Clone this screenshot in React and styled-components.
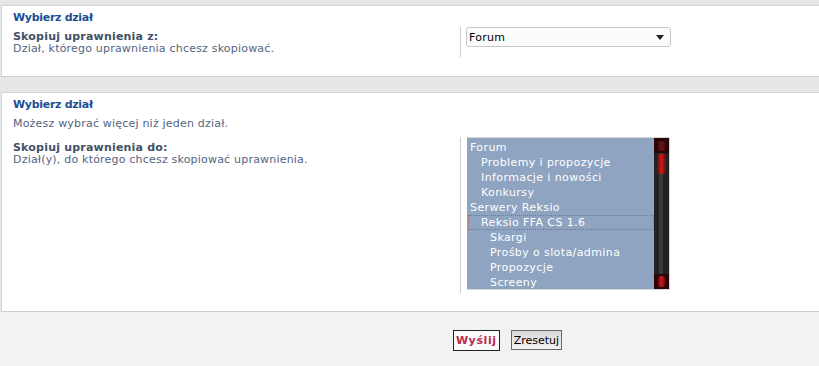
import React from "react";
import styled, { createGlobalStyle } from "styled-components";

const GlobalStyle = createGlobalStyle`
  html, body {
    margin: 0;
    padding: 0;
    background: #e6e7e9;
    font-family: "DejaVu Sans", Verdana, sans-serif;
    font-size: 11px;
  }
`;

const Page = styled.div`
  padding-top: 5px;
  width: 819px;
  height: 366px;
  overflow: hidden;
  box-sizing: border-box;
`;

const Panel = styled.section`
  margin: 0 0 ${({ gap }) => gap || 0}px 1px;
  padding: 5px 0 0 11px;
  background: #fff;
  border-top: 1px solid #d4d4d4;
  border-left: 1px solid #d4d4d4;
  border-bottom: 1px solid #cccccc;
  height: ${({ h }) => h}px;
  box-sizing: border-box;
`;

const Title = styled.h3`
  margin: 0;
  font-size: 11px;
  line-height: 13px;
  font-weight: bold;
  letter-spacing: -0.3px;
  color: #1a4f96;
`;

const Note = styled.p`
  margin: 6px 0 0;
  line-height: 13px;
  letter-spacing: 0.2px;
  color: #536482;
`;

const Row = styled.dl`
  display: flex;
  margin: ${({ top }) => top}px 0 0;
`;

const Term = styled.dt`
  width: 447px;
  padding-top: ${({ pad }) => pad}px;
  color: #536482;
  line-height: 12px;
  letter-spacing: 0.2px;
`;

const Label = styled.label`
  display: block;
  font-weight: bold;
  color: #425067;
`;

const Field = styled.dd`
  margin: 0;
  padding: 0 0 ${({ pb }) => pb}px 5px;
  border-left: 1px solid #cfcfcf;
`;

const Select = styled.div`
  display: flex;
  align-items: center;
  justify-content: space-between;
  width: 205px;
  height: 20px;
  box-sizing: border-box;
  border: 1px solid #c8c8c8;
  border-radius: 3px;
  background: #fbfbfb;
  padding: 0 6px 0 2px;
  color: #000;
  font-size: 11px;
  letter-spacing: 0.3px;
`;

const ListBox = styled.div`
  display: flex;
  width: 203px;
  height: 153px;
  margin-left: 1px;
  border: 1px solid #d8d8d8;
  border-left: 0;
  box-sizing: border-box;
  background: #8ea4c1;
  overflow: hidden;
`;

const Options = styled.ul`
  flex: 1;
  list-style: none;
  margin: 0;
  padding: 2px 0 0 1px;
`;

const Option = styled.li`
  height: 15px;
  line-height: 15px;
  padding-left: ${({ level }) => 2 + level * 11 - (level === 2 ? 2 : 0)}px;
  color: #fff;
  letter-spacing: 0.4px;
  white-space: nowrap;
  box-sizing: border-box;
  outline: ${({ focus }) => (focus ? "1px dotted #b7653a" : "none")};
  outline-offset: -1px;
`;

const Scrollbar = styled.div`
  width: 15px;
  display: flex;
  flex-direction: column;
  background: #262626;
`;

const ScrollButton = styled.div`
  height: 15px;
  background: #2a0707;
  display: flex;
  justify-content: center;
  align-items: center;
`;

const Pill = styled.div`
  width: 7px;
  height: ${({ h }) => h}px;
  border-radius: 3px;
  background: ${({ dim }) =>
    dim
      ? "linear-gradient(90deg, #4a0d0d, #6a1414, #4a0d0d)"
      : "linear-gradient(90deg, #7a0a0a, #c41a1a, #7a0a0a)"};
`;

const Track = styled.div`
  flex: 1;
  display: flex;
  flex-direction: column;
  align-items: center;
  padding-top: 1px;
  background: linear-gradient(90deg, #222 0, #222 5px, #3a3a3a 5px, #3a3a3a 9px, #222 9px);
`;

const Thumb = styled.div`
  width: 9px;
  height: 20px;
  border-radius: 3px;
  background: linear-gradient(90deg, #6a0808, #c81c1c, #6a0808);
`;

const Footer = styled.div`
  display: flex;
  align-items: flex-start;
  justify-content: center;
  gap: 11px;
  padding: 18px 0 0 196px;
  background: #f2f2f2;
  height: 60px;
  box-sizing: border-box;
`;

const Button = styled.button`
  font-family: "DejaVu Sans", Verdana, sans-serif;
  font-size: 11px;
  height: ${({ primary }) => (primary ? 21 : 20)}px;
  padding: 0 2px;
  margin: 0;
  border: 1px solid ${({ primary }) => (primary ? "#222" : "#666")};
  background: ${({ primary }) =>
    primary ? "#fafafa" : "linear-gradient(#d8d8d8, #f4f4f4)"};
  color: ${({ primary }) => (primary ? "#bc2a4d" : "#000")};
  font-weight: ${({ primary }) => (primary ? "bold" : "normal")};
  letter-spacing: ${({ primary }) => (primary ? "0.6px" : "0")};
  cursor: pointer;
`;

const forums = [
  { name: "Forum", level: 0 },
  { name: "Problemy i propozycje", level: 1 },
  { name: "Informacje i nowości", level: 1 },
  { name: "Konkursy", level: 1 },
  { name: "Serwery Reksio", level: 0 },
  { name: "Reksio FFA CS 1.6", level: 1, focus: true },
  { name: "Skargi", level: 2 },
  { name: "Prośby o slota/admina", level: 2 },
  { name: "Propozycje", level: 2 },
  { name: "Screeny", level: 2 },
];

const App = () => (
  <>
    <GlobalStyle />
    <Page>
      <Panel h={72} gap={15}>
        <Title>Wybierz dział</Title>
        <Row top={3}>
          <Term pad={4}>
            <Label>Skopiuj uprawnienia z:</Label>
            Dział, którego uprawnienia chcesz skopiować.
          </Term>
          <Field pb={10}>
            <Select>
              Forum
              <svg width="8" height="5" viewBox="0 0 8 5">
                <path d="M0 0h8L4 5z" fill="#222" />
              </svg>
            </Select>
          </Field>
        </Row>
      </Panel>
      <Panel h={220}>
        <Title>Wybierz dział</Title>
        <Note>Możesz wybrać więcej niż jeden dział.</Note>
        <Row top={7}>
          <Term pad={5}>
            <Label>Skopiuj uprawnienia do:</Label>
            Dział(y), do którego chcesz skopiować uprawnienia.
          </Term>
          <Field pb={3}>
            <ListBox>
              <Options>
                {forums.map((f) => (
                  <Option key={f.name} level={f.level} focus={f.focus}>
                    {f.name}
                  </Option>
                ))}
              </Options>
              <Scrollbar>
                <ScrollButton>
                  <Pill dim h={10} />
                </ScrollButton>
                <Track>
                  <Thumb />
                </Track>
                <ScrollButton>
                  <Pill h={11} />
                </ScrollButton>
              </Scrollbar>
            </ListBox>
          </Field>
        </Row>
      </Panel>
      <Footer>
        <Button primary>Wyślij</Button>
        <Button>Zresetuj</Button>
      </Footer>
    </Page>
  </>
);

export default App;
